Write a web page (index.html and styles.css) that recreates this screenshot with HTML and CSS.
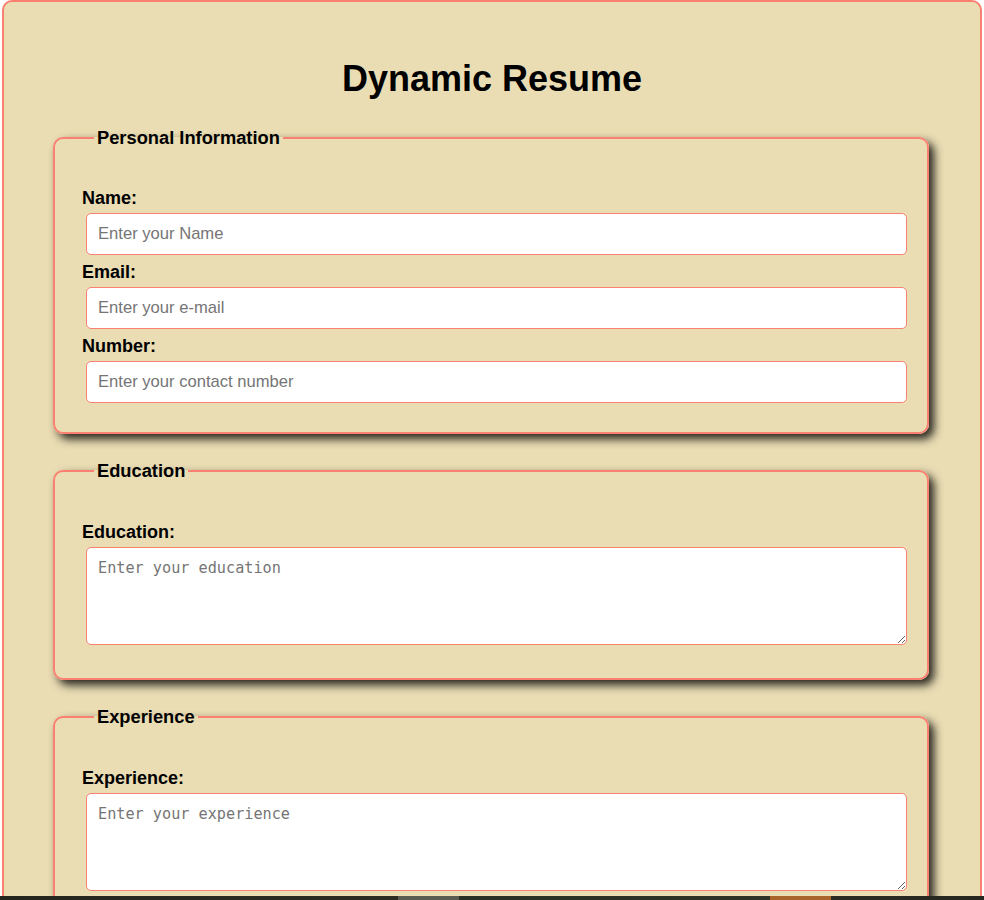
FILE: index.html
```html
<!DOCTYPE html>
<html lang="en">
<head>
<meta charset="utf-8">
<title>Dynamic Resume</title>
<link rel="stylesheet" href="styles.css">
</head>
<body>
<div class="resume">
  <h1 class="title">Dynamic Resume</h1>
  <form class="resume-form">
    <fieldset class="section">
      <legend class="section-title">Personal Information</legend>
      <label class="field-label" for="name">Name:</label>
      <input class="field-input" id="name" type="text" placeholder="Enter your Name">
      <label class="field-label" for="email">Email:</label>
      <input class="field-input" id="email" type="email" placeholder="Enter your e-mail">
      <label class="field-label" for="number">Number:</label>
      <input class="field-input field-last" id="number" type="tel" placeholder="Enter your contact number">
    </fieldset>
    <fieldset class="section section-text">
      <legend class="section-title">Education</legend>
      <label class="field-label" for="education">Education:</label>
      <textarea class="field-area" id="education" placeholder="Enter your education"></textarea>
    </fieldset>
    <fieldset class="section section-text">
      <legend class="section-title">Experience</legend>
      <label class="field-label" for="experience">Experience:</label>
      <textarea class="field-area" id="experience" placeholder="Enter your experience"></textarea>
    </fieldset>
  </form>
</div>
<div class="taskbar"></div>
</body>
</html>
```

FILE: styles.css
```css
html, body {
  margin: 0;
  padding: 0;
  background: #ffffff;
  font-family: "Liberation Sans", Arial, sans-serif;
}

.resume {
  margin: 0 2px;
  background: #eaddb4;
  border: 2px solid #fa8072;
  border-radius: 10px;
  padding: 0 0 40px;
  min-height: 1200px;
}

.title {
  margin: 56px 0 0;
  text-align: center;
  font-size: 36px;
  font-weight: bold;
  line-height: 41px;
  color: #000;
}

.resume-form {
  display: flex;
  flex-direction: column;
  gap: 26px;
  margin: 28px 51px 0 49px;
}

.section {
  margin: 0;
  border: 2px solid #fa8072;
  border-radius: 10px;
  padding: 40px 20px 29px 27px;
  box-shadow: 5px 5px 10px rgba(0, 0, 0, 0.85);
  background: #eaddb4;
  min-width: 0;
}

.section.section-text {
  padding-top: 41px;
}

.section-title {
  margin-left: 12px;
  padding: 0 3px;
  font-size: 18.3px;
  line-height: 21px;
  font-weight: bold;
  color: #000;
}

.field-label {
  display: block;
  font-size: 18px;
  line-height: 21px;
  font-weight: bold;
  color: #000;
  margin: 0 0 4px;
}

.field-input,
.field-area {
  display: block;
  box-sizing: border-box;
  width: calc(100% - 4px);
  margin: 0 0 7px 4px;
  border: 1px solid #fa8072;
  border-radius: 5px;
  background: #fff;
  padding: 0 11px;
  outline: none;
}

.field-input {
  height: 42px;
  font-family: "Liberation Sans", Arial, sans-serif;
  font-size: 16.6px;
}

.field-input.field-last {
  margin-bottom: 0;
}

.field-area {
  height: 98px;
  margin-bottom: 4px;
  padding-top: 11px;
  font-family: "DejaVu Sans Mono", monospace;
  font-size: 15.2px;
  line-height: 18px;
  resize: vertical;
}

.field-input::placeholder,
.field-area::placeholder {
  color: #757575;
}

.taskbar {
  position: fixed;
  left: 0;
  right: 0;
  bottom: 0;
  height: 4px;
  background: linear-gradient(to right,
    #24261e 0, #2c2c22 398px,
    #5a5c52 398px, #5a5c52 459px,
    #283024 459px, #2e3426 770px,
    #a8642a 770px, #a8642a 831px,
    #2a2c24 831px, #26281f 100%);
}
```
